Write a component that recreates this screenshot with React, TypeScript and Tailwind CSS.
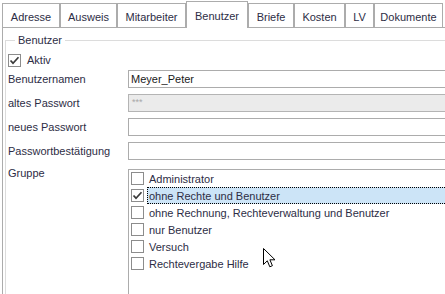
import React from "react"

const tabs = [
  { label: "Adresse", w: "w-[58px]" },
  { label: "Ausweis", w: "w-[57px]" },
  { label: "Mitarbeiter", w: "w-[69px]" },
  { label: "Benutzer", w: "w-[62px]", active: true },
  { label: "Briefe", w: "w-[46px]" },
  { label: "Kosten", w: "w-[51px]" },
  { label: "LV", w: "w-[29px]" },
  { label: "Dokumente", w: "w-[69px]" },
]

const groups = [
  "Administrator",
  "ohne Rechte und Benutzer",
  "ohne Rechnung, Rechteverwaltung und Benutzer",
  "nur Benutzer",
  "Versuch",
  "Rechtevergabe Hilfe",
]

function CheckBox({ checked }: { checked?: boolean }) {
  return (
    <span className="flex h-[13px] w-[13px] shrink-0 items-center justify-center border border-[#8c8c8c] bg-white">
      {checked && (
        <svg width="11" height="11" viewBox="0 0 11 11">
          <path d="M1.5 5.5 L4 8.2 L9.5 2.2" stroke="#3a3a3a" strokeWidth="1.7" fill="none" />
        </svg>
      )}
    </span>
  )
}

function Field({ label, children }: { label: string; children: React.ReactNode }) {
  return (
    <div className="mt-[6px] flex h-[18px] items-center">
      <span className="w-[120px] shrink-0">{label}</span>
      {children}
    </div>
  )
}

export default function App() {
  return (
    <div className="relative h-[294px] w-[445px] overflow-hidden bg-white font-['Liberation_Sans',Arial,sans-serif] text-[11px] leading-[14px] text-[#2d2d45]">
      <div className="w-[480px] pl-[2px]">
        {/* Tabs */}
        <div className="relative z-10 flex h-[27px] items-end">
          {tabs.map((t) =>
            t.active ? (
              <div
                key={t.label}
                className={`${t.w} -mb-px flex h-[27px] items-center justify-center border-x border-t border-[#acacac] bg-white pt-[2px]`}
              >
                {t.label}
              </div>
            ) : (
              <div
                key={t.label}
                className={`${t.w} flex h-[24px] items-center justify-center border-x border-t border-[#acacac] bg-white pt-[2px]`}
              >
                {t.label}
              </div>
            )
          )}
        </div>

        {/* Pane */}
        <div className="h-[267px] border-l border-t border-[#acacac] pl-[2px] pt-[5px]">
          <fieldset className="h-[300px] border-l border-t border-[#dcdcdc] pl-[2px]">
            <legend className="ml-[7px] px-[3px] leading-[14px]">Benutzer</legend>

            <div className="mt-[5px] flex h-[16px] items-center gap-[6px]">
              <CheckBox checked />
              <span>Aktiv</span>
            </div>

            <div className="mt-[2px] flex h-[18px] items-center">
              <span className="w-[120px] shrink-0">Benutzernamen</span>
              <div className="h-[18px] flex-1 border border-[#acacac] pl-[2px] leading-[16px] text-[#1a1a1a]">
                Meyer_Peter
              </div>
            </div>

            <Field label="altes Passwort">
              <div className="h-[18px] flex-1 border border-[#b4b4b4] bg-[#ebebeb] pl-[3px] text-[9px] leading-[14px] text-[#a8a8a8]">
                ***
              </div>
            </Field>

            <Field label="neues Passwort">
              <div className="h-[18px] flex-1 border border-[#acacac]" />
            </Field>

            <Field label="Passwortbestätigung">
              <div className="h-[18px] flex-1 border border-[#acacac]" />
            </Field>

            <div className="mt-[9px] flex items-start">
              <span className="-mt-[3px] w-[120px] shrink-0">Gruppe</span>
              <div className="h-[140px] flex-1 border border-[#acacac]">
                {groups.map((g, i) => (
                  <div key={g} className="flex h-[17px] items-center pl-[2px]">
                    <CheckBox checked={i === 1} />
                    <span
                      className={`ml-[3px] flex h-[17px] flex-1 items-center border pl-[1px] ${
                        i === 1 ? "border-dotted border-black bg-[#cce4f7]" : "border-transparent"
                      }`}
                    >
                      {g}
                    </span>
                  </div>
                ))}
              </div>
            </div>
          </fieldset>
        </div>
      </div>

      {/* Mouse pointer */}
      <svg className="absolute left-[263px] top-[248px]" width="14" height="21" viewBox="0 0 14 21">
        <path
          d="M0.5 0.5 L0.5 16.5 L4.3 12.8 L6.8 18.8 L9.4 17.7 L6.9 11.8 L12 11.8 Z"
          fill="white"
          stroke="black"
          strokeWidth="1"
          strokeLinejoin="round"
        />
      </svg>
    </div>
  )
}
